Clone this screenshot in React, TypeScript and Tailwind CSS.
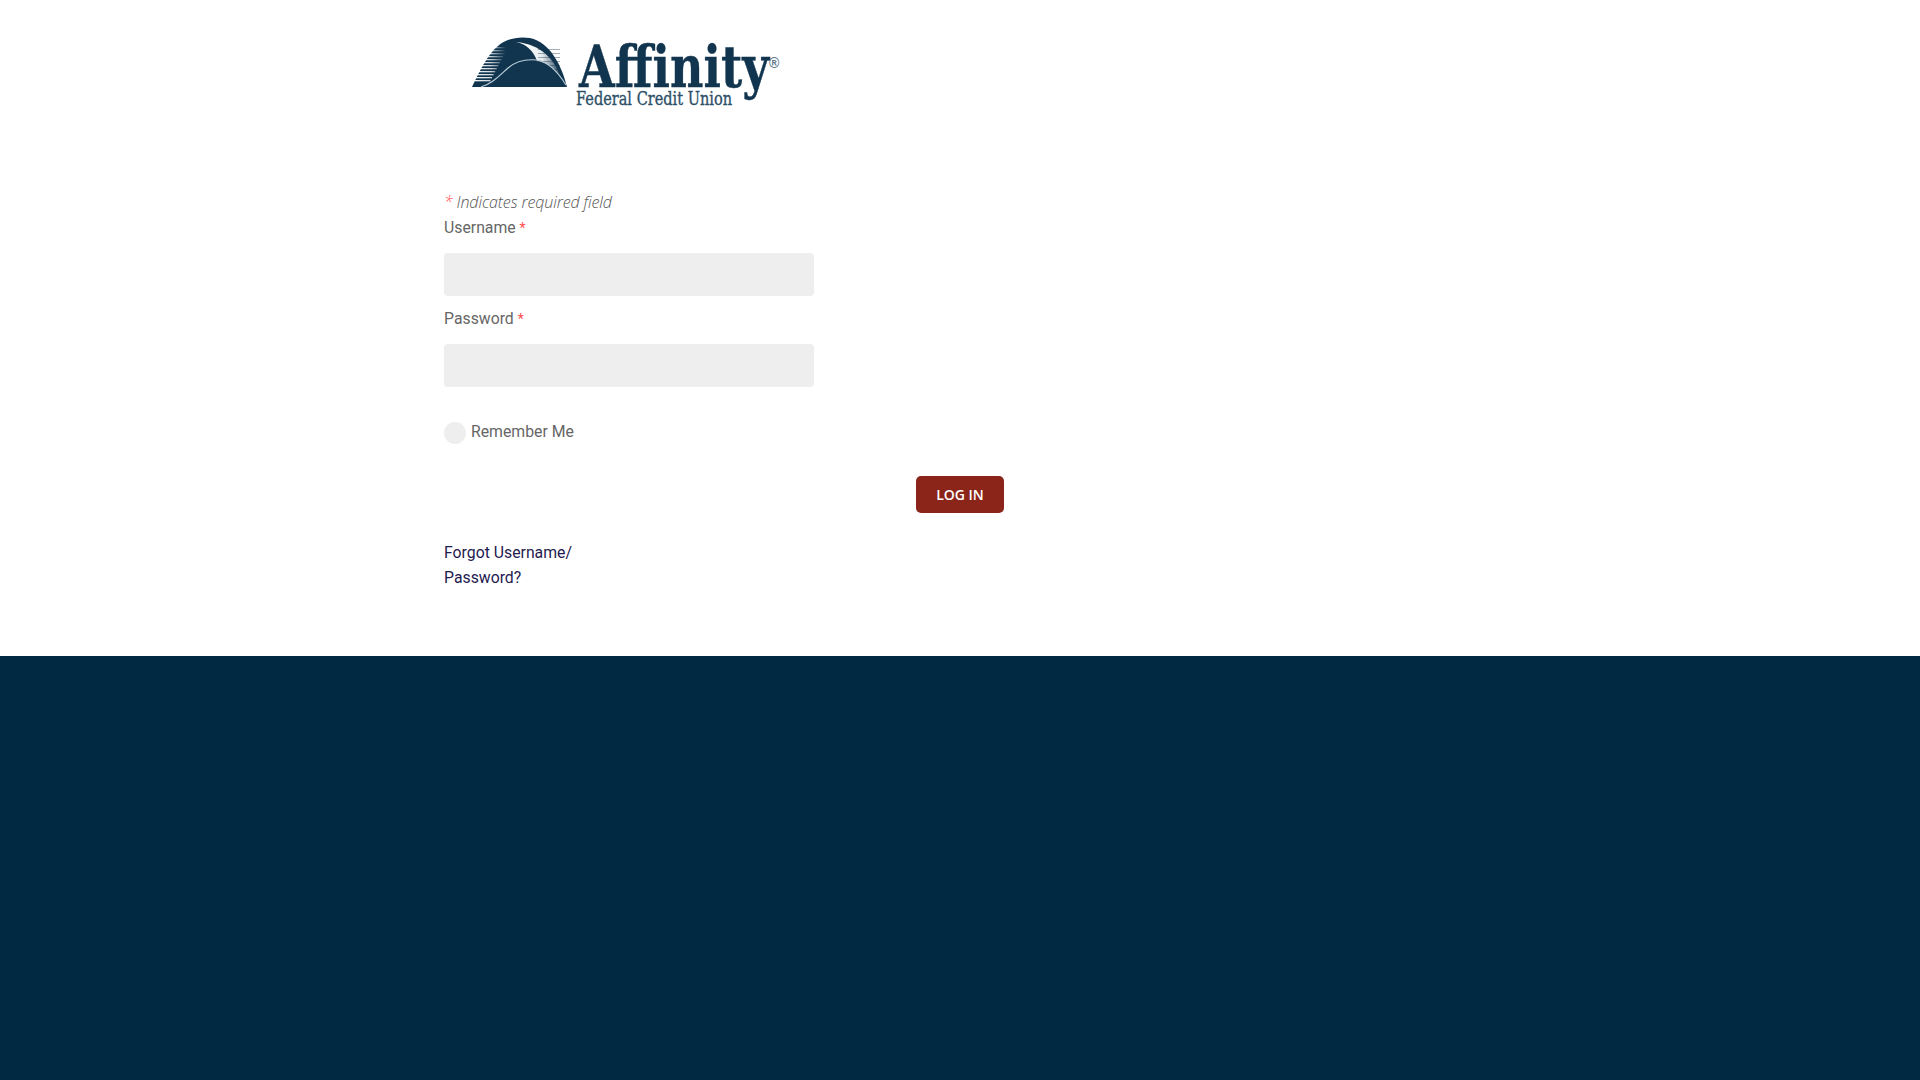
const Logo = () => (
  <svg viewBox="444 20 340 100" className="block w-[340px] h-[100px]">
    <defs>
      <linearGradient id="streak" gradientUnits="userSpaceOnUse" x1="472" x2="506" y1="0" y2="0">
        <stop offset="0" stopColor="#fff" />
        <stop offset="0.55" stopColor="#fff" stopOpacity="0.8" />
        <stop offset="1" stopColor="#fff" stopOpacity="0" />
      </linearGradient>
      <linearGradient id="wing" gradientUnits="userSpaceOnUse" x1="522" x2="562" y1="0" y2="0">
        <stop offset="0" stopColor="#fff" />
        <stop offset="0.5" stopColor="#e6ecf0" />
        <stop offset="1" stopColor="#12354f" />
      </linearGradient>
    </defs>
    {/* dome */}
    <path d="M472 87 C480 70 488 54 498 46 C506 39 518 36 530 38 C550 42 562 66 567 87 Z" fill="#12354f" />
    <path d="M516 42 C527 44 534 52 537 61 C545 62 553 67 560 76 C555 60 541 44 516 42 Z" fill="url(#wing)" />
    {[49, 53, 57, 61, 65, 69].map((y) => (
      <rect key={y} x={538} y={y} width={22} height={0.8} fill="#12354f" opacity="0.5" />
    ))}
    {[47, 50, 53, 56, 59, 62, 65, 68, 71, 74, 77, 80].map((y, i) => (
      <rect key={y} x={470} y={y} width={38 - i * 1.6} height={1.3} fill="url(#streak)" />
    ))}
    <path d="M481 87 C492 84 499 76 508 68 C516 61 527 59 537 60 C548 62 558 72 566 85" fill="none" stroke="#b9cbd6" strokeWidth="1.2" />
    {/* wordmark */}
    <text x="579" y="87" textLength="190" lengthAdjust="spacingAndGlyphs" fill="#12354f" stroke="#12354f" strokeWidth="0.4" fontSize="57" fontWeight="700" className="[font-family:'DejaVu_Serif',serif]">Affinity</text>
    <text x="769" y="68" fill="#5f7a8c" fontSize="14" fontWeight="700" className="[font-family:'Liberation_Sans',sans-serif]">®</text>
    <text x="576" y="105" textLength="156" lengthAdjust="spacingAndGlyphs" fill="#2d5068" stroke="#2d5068" strokeWidth="0.35" fontSize="18" className="[font-family:'DejaVu_Serif',serif]">Federal Credit Union</text>
  </svg>
);

const Field = ({ label }: { label: string }) => (
  <div>
    <label className="block h-[25px] leading-[25px] text-[15.8px] text-[#666]">
      {label} <span className="text-[14px] text-[#ff4d4d]">*</span>
    </label>
    <input className="block mt-[13px] w-[370px] h-[43px] rounded-[4px] bg-[#eee] outline-none" />
  </div>
);

export default function App() {
  return (
    <div className="min-h-screen flex flex-col bg-white [font-family:Roboto,sans-serif]">
      <main className="h-[656px] w-[1032px] mx-auto pt-[20px]">
        <Logo />
        <div className="w-[560px] mt-[71px]">
          <p className="h-[24px] leading-[22px] text-[16px] font-light italic text-[#555] tracking-[-0.1px] [font-family:'Open_Sans',sans-serif]">
            <span className="text-[#ff4d4d]">*</span> Indicates required field
          </p>
          <div className="flex flex-col gap-[10px]">
            <Field label="Username" />
            <Field label="Password" />
          </div>
          <label className="flex items-start gap-[5px] mt-[35px] text-[15.8px] leading-[20px] text-[#666]">
            <span className="w-[22px] h-[22px] rounded-full bg-[#eee]" />
            Remember Me
          </label>
          <div className="flex justify-end mt-[32px]">
            <button className="w-[88px] h-[37px] rounded-[5px] bg-[#8b2519] text-white text-[14px] font-[550] [font-family:'Open_Sans',sans-serif]">
              LOG IN
            </button>
          </div>
          <a className="block mt-[27px] w-[140px] text-[15.8px] leading-[25px] text-[#1f1a4f]">
            Forgot Username/ Password?
          </a>
        </div>
      </main>
      <footer className="flex-1 bg-[#012a42]" />
    </div>
  );
}
